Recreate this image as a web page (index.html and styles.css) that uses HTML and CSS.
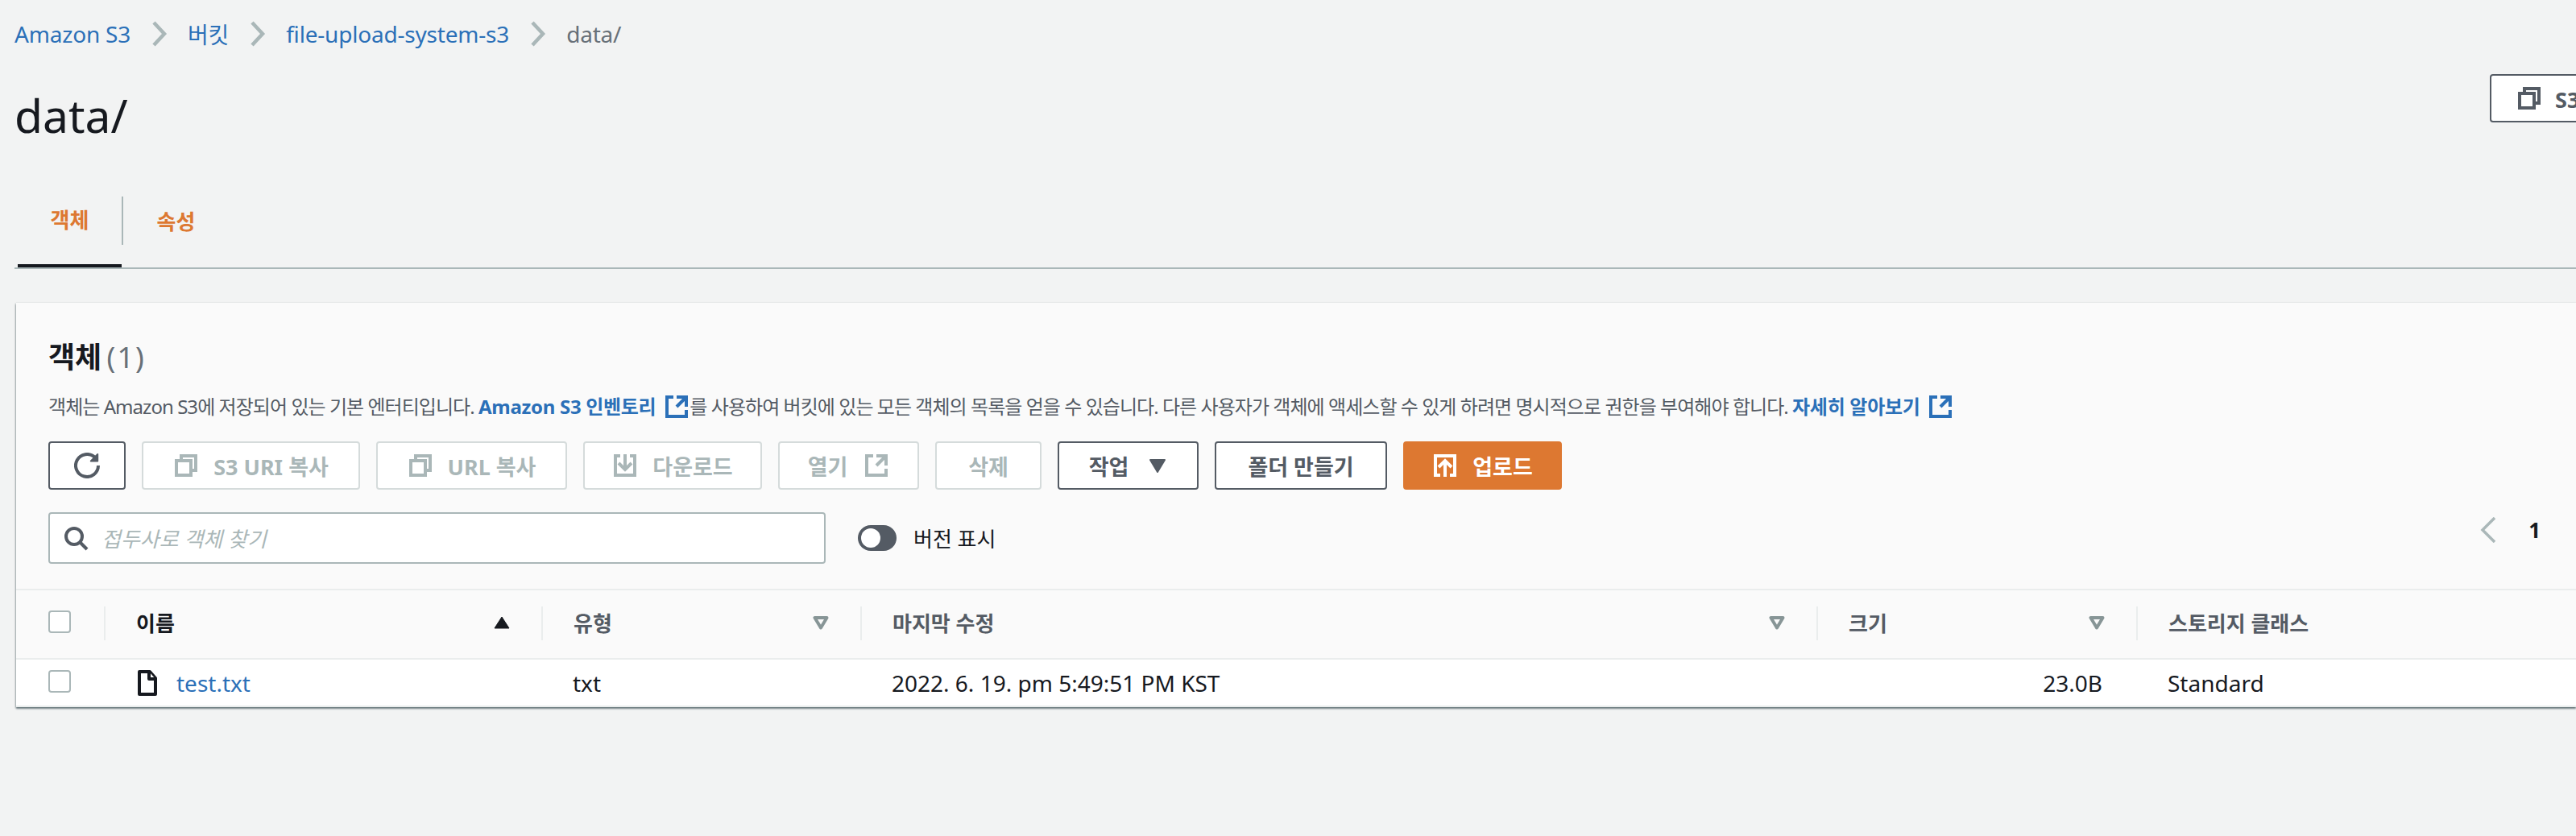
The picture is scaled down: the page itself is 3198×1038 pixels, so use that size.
FILE: index.html
```html
<!DOCTYPE html>
<html lang="ko">
<head>
<meta charset="utf-8">
<title>data/ - S3</title>
<link rel="stylesheet" href="styles.css">
</head>
<body>
<svg class="defs" width="0" height="0" aria-hidden="true">
  <defs>
    <symbol id="i-copy" viewBox="0 0 16 16"><path d="M2 5h9v9H2z"/><path d="M5 5V2h9v9h-3"/></symbol>
    <symbol id="i-ext" viewBox="0 0 16 16"><path d="M14 8V2H8"/><path d="M14 2 8 8"/><path d="M6 2H2v12h12v-4"/></symbol>
    <symbol id="i-down" viewBox="0 0 16 16"><path d="M11 2h3v12H2V2h3"/><path d="M4 6.5l4 4 4-4"/><path d="M8 1v9"/></symbol>
    <symbol id="i-up" viewBox="0 0 16 16"><path d="M5 14H2V2h12v12h-3"/><path d="M4 9l4-4 4 4"/><path d="M8 15V5"/></symbol>
  </defs>
</svg>
<div class="page">
  <nav class="crumbs">
    <a class="link">Amazon S3</a>
    <svg class="sep" viewBox="0 0 20 32"><path d="M3 2l13 14L3 30"/></svg>
    <a class="link">버킷</a>
    <svg class="sep" viewBox="0 0 20 32"><path d="M3 2l13 14L3 30"/></svg>
    <a class="link">file-upload-system-s3</a>
    <svg class="sep" viewBox="0 0 20 32"><path d="M3 2l13 14L3 30"/></svg>
    <span class="crumb-current">data/</span>
  </nav>
  <header class="head">
    <h1 class="title">data/</h1>
    <button class="btn btn-top"><svg class="ico"><use href="#i-copy"/></svg><span>S3 URI 복사</span></button>
  </header>
  <div class="tabs">
    <div class="tab tab-active"><span>객체</span></div>
    <div class="tab tab-second"><span>속성</span></div>
  </div>
  <section class="card">
    <div class="card-head">
      <h2 class="card-title">객체 <span class="count">(1)</span></h2>
      <p class="desc">객체는 Amazon S3에 저장되어 있는 기본 엔터티입니다. <a class="link strong">Amazon S3 인벤토리 <svg class="ico ico-link"><use href="#i-ext"/></svg></a>를 사용하여 버킷에 있는 모든 객체의 목록을 얻을 수 있습니다. 다른 사용자가 객체에 액세스할 수 있게 하려면 명시적으로 권한을 부여해야 합니다. <a class="link strong">자세히 알아보기 <svg class="ico ico-link"><use href="#i-ext"/></svg></a></p>
      <div class="actions">
        <button class="btn w-refresh"><svg class="ico" viewBox="0 0 16 16"><path d="M15 8a7 7 0 1 1-2.2-5.1"/><path class="solid" d="M14.6 1v4.2h-4.2z"/></svg></button>
        <button class="btn off w-s3"><svg class="ico"><use href="#i-copy"/></svg><span>S3 URI 복사</span></button>
        <button class="btn off w-url"><svg class="ico"><use href="#i-copy"/></svg><span>URL 복사</span></button>
        <button class="btn off w-down"><svg class="ico"><use href="#i-down"/></svg><span>다운로드</span></button>
        <button class="btn off w-open"><span>열기</span><svg class="ico"><use href="#i-ext"/></svg></button>
        <button class="btn off w-del"><span>삭제</span></button>
        <button class="btn w-act"><span>작업</span><svg class="ico caret" viewBox="0 0 16 16"><path class="solid" d="M3.5 4.5h9L8 12z"/></svg></button>
        <button class="btn w-folder"><span>폴더 만들기</span></button>
        <button class="btn primary w-upload"><svg class="ico"><use href="#i-up"/></svg><span>업로드</span></button>
      </div>
      <div class="filter-row">
        <div class="search">
          <svg class="ico ico-search" viewBox="0 0 16 16"><circle cx="7" cy="7" r="5"/><path d="m15 15-4.5-4.5"/></svg>
          <span class="placeholder">접두사로 객체 찾기</span>
        </div>
        <div class="toggle"><span class="knob"></span></div>
        <span class="toggle-label">버전 표시</span>
        <div class="pager">
          <svg class="pager-prev" viewBox="0 0 20 32"><path d="M18 1 3 16l15 15"/></svg>
          <span class="page-num">1</span>
        </div>
      </div>
    </div>
    <div class="table">
      <div class="tr thead">
        <div class="th th-check"><span class="check"></span></div>
        <div class="th"><div class="th-in sorted"><span>이름</span><svg class="sort" viewBox="0 0 22 18"><path class="solid" d="M11 2l9 14H2z"/></svg></div></div>
        <div class="th"><div class="th-in"><span>유형</span><svg class="sort" viewBox="0 0 22 18"><path d="M3.500 3h15L11 15.500z"/></svg></div></div>
        <div class="th"><div class="th-in"><span>마지막 수정</span><svg class="sort" viewBox="0 0 22 18"><path d="M3.500 3h15L11 15.500z"/></svg></div></div>
        <div class="th"><div class="th-in"><span>크기</span><svg class="sort" viewBox="0 0 22 18"><path d="M3.500 3h15L11 15.500z"/></svg></div></div>
        <div class="th"><div class="th-in"><span>스토리지 클래스</span></div></div>
      </div>
      <div class="tr tbody">
        <div class="td td-check"><span class="check"></span></div>
        <div class="td td-name"><svg class="file" viewBox="0 0 24 32"><path d="M2 2h13l7 8v20H2z"/><path d="M14 2v9h8"/></svg><a class="link">test.txt</a></div>
        <div class="td">txt</div>
        <div class="td">2022. 6. 19. pm 5:49:51 PM KST</div>
        <div class="td td-size">23.0B</div>
        <div class="td">Standard</div>
      </div>
    </div>
  </section>
</div>
</body>
</html>
```
FILE: styles.css
```css
html, body {
  margin: 0;
  width: 3198px;
  height: 1038px;
  overflow: hidden;
  background: #f2f3f3;
}
body {
  font-family: "Noto Sans", "Noto Sans CJK KR", sans-serif;
  font-size: 28px;
  color: #16191f;
}
.defs { position: absolute; }
.page {
  width: 3198px;
  padding: 0 0 0 18px;
  box-sizing: border-box;
}
.link { color: #2b70b8; text-decoration: none; }

/* breadcrumbs */
.crumbs {
  display: flex;
  align-items: center;
  height: 44px;
  padding-top: 20px;
  letter-spacing: -0.2px;
}
.sep {
  width: 20px;
  height: 32px;
  margin: 0 25px 0 26px;
  fill: none;
  stroke: #aab7b8;
  stroke-width: 4.5;
}
.crumb-current { color: #687078; }

/* page head */
.head {
  display: flex;
  justify-content: space-between;
  align-items: flex-start;
  height: 180px;
  box-sizing: border-box;
}
.title {
  margin: 0;
  font-size: 57px;
  font-weight: 400;
  line-height: 76px;
  padding-top: 41px;
}

/* tabs */
.tabs {
  display: flex;
  align-items: flex-end;
  height: 90px;
  margin-top: -2px;
  border-bottom: 2px solid #aab7b8;
  box-sizing: content-box;
}
.tab {
  height: 90px;
  box-sizing: border-box;
  display: flex;
  align-items: center;
  justify-content: center;
  font-size: 26px;
  font-weight: 700;
  color: #dd7831;
  padding-bottom: 27px;
}
.tab-active {
  width: 129px;
  margin-left: 4px;
  border-bottom: 4px solid #16191f;
  position: relative;
}
.tab-active::after {
  content: "";
  position: absolute;
  right: -2px;
  top: 2px;
  height: 60px;
  border-right: 2px solid #aab7b8;
}
.tab-second { width: 135px; }

/* card */
.card {
  margin: 42px 0 0 2px;
  background: #fafafa;
  box-shadow: 0 2px 2px rgba(0, 28, 36, 0.5), -1px 1px 2px rgba(0, 28, 36, 0.2), 0 -1px 1px rgba(0, 28, 36, 0.03);
  height: 502px;
}
.card-head {
  height: 355px;
  padding: 44px 0 0 40px;
  box-sizing: border-box;
}
.card-title {
  margin: 0;
  font-size: 36px;
  font-weight: 700;
  line-height: 48px;
}
.count { font-weight: 400; color: #687078; margin-left: -3px; letter-spacing: 2px; }
.desc {
  margin: 19px 0 0;
  font-size: 24px;
  line-height: 36px;
  color: #545b64;
  white-space: nowrap;
  letter-spacing: -0.95px;
}
.strong { font-weight: 700; letter-spacing: -0.3px; }

/* buttons */
.actions {
  display: flex;
  gap: 20px;
  margin-top: 25px;
}
.btn {
  display: flex;
  align-items: center;
  justify-content: center;
  gap: 18px;
  height: 60px;
  padding: 0;
  box-sizing: border-box;
  border: 2px solid #545b64;
  border-radius: 4px;
  background: #fff;
  color: #545b64;
  font: 700 27px "Noto Sans", "Noto Sans CJK KR", sans-serif;
}
.btn-top {
  margin-top: 28px;
  flex: none;
  width: 290px;
  margin-right: -183px;
  justify-content: flex-start;
  padding-left: 31px;
  gap: 16px;
}
.off { border-color: #d5dbdb; color: #aab7b8; }
.primary { background: #dd7831; border-color: #dd7831; color: #fff; }
.w-refresh { width: 96px; }
.w-s3 { width: 271px; }
.w-url { width: 237px; }
.w-down { width: 222px; }
.w-open { width: 175px; gap: 20px; }
.w-del { width: 132px; }
.w-act { width: 175px; gap: 20px; padding-left: 4px; }
.w-folder { width: 214px; }
.w-upload { width: 197px; }
.ico {
  width: 32px;
  height: 32px;
  flex: none;
  fill: none;
  stroke: currentColor;
  stroke-width: 2;
}
.solid { fill: currentColor; stroke: currentColor; stroke-linejoin: round; stroke-width: 1; }
.ico-link { color: #2b70b8; vertical-align: -7px; margin-left: 4px; }

/* filter row */
.filter-row {
  display: flex;
  align-items: center;
  margin-top: 28px;
  height: 64px;
}
.search {
  display: flex;
  align-items: center;
  gap: 14px;
  width: 965px;
  height: 64px;
  box-sizing: border-box;
  border: 2px solid #aab7b8;
  border-radius: 4px;
  background: #fff;
  padding-left: 16px;
}
.ico-search { color: #545b64; }
.placeholder {
  font-size: 26px;
  font-style: italic;
  color: #aab7b8;
  margin-left: 2px;
}
.toggle {
  width: 48px;
  height: 32px;
  margin-left: 40px;
  border-radius: 16px;
  background: #545b64;
  padding: 4px 0 0 4px;
  box-sizing: border-box;
}
.knob {
  display: block;
  width: 24px;
  height: 24px;
  border-radius: 50%;
  background: #fff;
}
.toggle-label { margin-left: 21px; font-size: 26px; color: #16191f; }
.pager {
  margin-left: auto;
  margin-right: 44px;
  align-self: flex-start;
  display: flex;
  align-items: center;
  height: 44px;
  gap: 40px;
}
.pager-prev {
  width: 20px;
  height: 32px;
  fill: none;
  stroke: #aab7b8;
  stroke-width: 3.500;
}
.page-num { font-size: 26px; font-weight: 700; }

/* table */
.tr {
  display: grid;
  grid-template-columns: 109px 543px 396px 1187px 397px 1fr;
}
.thead {
  height: 88px;
  padding-bottom: 2px;
  border-top: 2px solid #eaeded;
  border-bottom: 2px solid #eaeded;
  box-sizing: border-box;
  align-items: center;
  font-size: 26px;
  font-weight: 700;
  color: #545b64;
}
.th-check, .td-check { padding-left: 40px; display: flex; align-items: center; }
.th-check { padding-bottom: 4px; }
.check {
  display: block;
  width: 28px;
  height: 28px;
  box-sizing: border-box;
  border: 2px solid #aab7b8;
  border-radius: 4px;
  background: #fff;
}
.th-in {
  display: flex;
  align-items: center;
  justify-content: space-between;
  height: 42px;
  border-left: 2px solid #eaeded;
  padding: 0 38px 2px 38px;
  box-sizing: border-box;
}
.sorted { color: #16191f; }
.sort {
  width: 22px;
  height: 18px;
  fill: none;
  stroke: #879596;
  stroke-width: 4;
  stroke-linejoin: round;
}
.sorted .sort { color: #16191f; stroke: #16191f; }
.tbody {
  height: 57px;
  background: #fff;
  border-bottom: 2px solid #eaeded;
  box-sizing: content-box;
  align-items: center;
}
.td { padding-left: 39px; white-space: nowrap; font-size: 28px; }
.td-name { display: flex; align-items: center; gap: 24px; padding-left: 42px; }
.td-check { padding-left: 40px; padding-bottom: 4px; }
.file {
  width: 24px;
  height: 32px;
  fill: #fff;
  stroke: #16191f;
  stroke-width: 4;
  stroke-linejoin: round;
}
.td-size { text-align: right; padding-right: 42px; }
```
